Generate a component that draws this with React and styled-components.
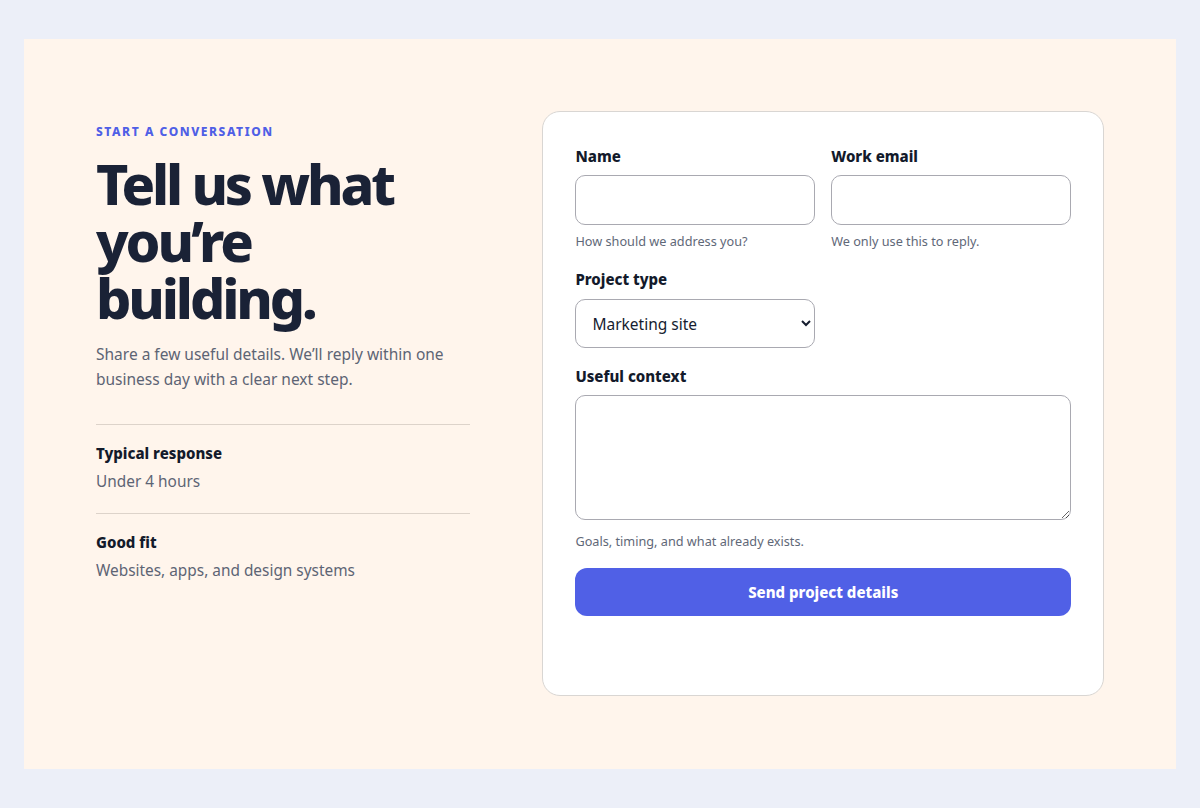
import React from "react";
import styled, { createGlobalStyle } from "styled-components";

const GlobalStyle = createGlobalStyle`
  * {
    box-sizing: border-box;
  }
  body {
    margin: 0;
    background: #eceff8;
    font-family: "Noto Sans", "Open Sans", sans-serif;
    color: #161d2f;
  }
`;

const facts = [
  { label: "Typical response", value: "Under 4 hours" },
  { label: "Good fit", value: "Websites, apps, and design systems" },
];

function App() {
  return (
    <Page>
      <GlobalStyle />
      <Panel>
        <Intro>
          <Eyebrow>Start a conversation</Eyebrow>
          <Heading>Tell us what you’re building.</Heading>
          <Lead>
            Share a few useful details. We’ll reply within one business day
            with a clear next step.
          </Lead>
          <Facts>
            {facts.map((f) => (
              <Fact key={f.label}>
                <FactLabel>{f.label}</FactLabel>
                <FactValue>{f.value}</FactValue>
              </Fact>
            ))}
          </Facts>
        </Intro>

        <Card>
          <Form onSubmit={(e) => e.preventDefault()}>
            <Row>
              <Field>
                <Label htmlFor="name">Name</Label>
                <Input id="name" type="text" />
                <Help>How should we address you?</Help>
              </Field>
              <Field>
                <Label htmlFor="email">Work email</Label>
                <Input id="email" type="email" />
                <Help>We only use this to reply.</Help>
              </Field>
            </Row>
            <Row>
              <Field>
                <Label htmlFor="type">Project type</Label>
                <Select id="type" defaultValue="marketing">
                  <option value="marketing">Marketing site</option>
                  <option value="app">Web app</option>
                  <option value="design">Design system</option>
                </Select>
              </Field>
            </Row>
            <Field>
              <Label htmlFor="context">Useful context</Label>
              <TextArea id="context" />
              <Help $spaced>Goals, timing, and what already exists.</Help>
            </Field>
            <Submit type="submit">Send project details</Submit>
          </Form>
        </Card>
      </Panel>
    </Page>
  );
}

const Page = styled.div`
  min-height: 100vh;
  padding: 0 24px;
  display: flex;
  align-items: center;
`;

const Panel = styled.main`
  width: 100%;
  height: 730px;
  background: #fff5ec;
  padding: 72px;
  display: grid;
  grid-template-columns: 2fr 3fr;
  gap: 72px;
  align-items: start;
`;

const Intro = styled.section`
  display: flex;
  flex-direction: column;
`;

const Eyebrow = styled.p`
  margin: 12px 0 0;
  font-size: 12px;
  line-height: 18px;
  font-weight: 800;
  letter-spacing: 0.13em;
  text-transform: uppercase;
  color: #4f5fe6;
`;

const Heading = styled.h1`
  margin: 14px 0 0;
  font-size: 55.5px;
  line-height: 57px;
  font-weight: 800;
  letter-spacing: -0.056em;
  color: #1a2236;
  max-width: 320px;
`;

const Lead = styled.p`
  margin: 16px 0 0;
  font-size: 15.5px;
  line-height: 25px;
  color: #5d6474;
`;

const Facts = styled.div`
  margin-top: 32px;
  display: flex;
  flex-direction: column;
`;

const Fact = styled.div`
  border-top: 1px solid #ddd3ca;
  padding: 17px 0 20px;
`;

const FactLabel = styled.div`
  font-size: 15px;
  line-height: 23px;
  font-weight: 800;
  color: #131a2b;
`;

const FactValue = styled.div`
  margin-top: 5px;
  font-size: 15.4px;
  line-height: 23px;
  color: #5d6474;
`;

const Card = styled.section`
  min-height: 585px;
  background: #ffffff;
  border: 1px solid #d9d6d3;
  border-radius: 18px;
  padding: 32px;
`;

const Form = styled.form`
  display: flex;
  flex-direction: column;
  gap: 17px;
`;

const Row = styled.div`
  display: grid;
  grid-template-columns: 1fr 1fr;
  gap: 16px;
`;

const Field = styled.div`
  display: flex;
  flex-direction: column;
`;

const Label = styled.label`
  font-size: 15px;
  line-height: 24px;
  font-weight: 800;
  color: #131a2b;
  margin-bottom: 7px;
`;

const controlBase = `
  width: 100%;
  border: 1px solid #a9a9b1;
  border-radius: 10px;
  background: #ffffff;
  font-family: inherit;
  font-size: 15.5px;
  color: #161d2f;
  outline: none;
`;

const Input = styled.input`
  ${controlBase}
  height: 50px;
  padding: 0 16px;
`;

const Select = styled.select`
  ${controlBase}
  height: 49px;
  padding: 0 12px;
  margin-top: 1px;
  margin-bottom: -1px;
`;

const TextArea = styled.textarea`
  ${controlBase}
  display: block;
  height: 125px;
  padding: 12px 16px;
  resize: vertical;
`;

const Help = styled.span`
  margin-top: ${(p) => (p.$spaced ? "12px" : "7px")};
  font-size: 12.7px;
  line-height: 18px;
  color: #5f6878;
`;

const Submit = styled.button`
  height: 48px;
  margin-top: 1px;
  border: 0;
  border-radius: 12px;
  background: #5060e6;
  color: #ffffff;
  font-family: inherit;
  font-size: 15px;
  font-weight: 800;
  cursor: pointer;
`;

export default App;
